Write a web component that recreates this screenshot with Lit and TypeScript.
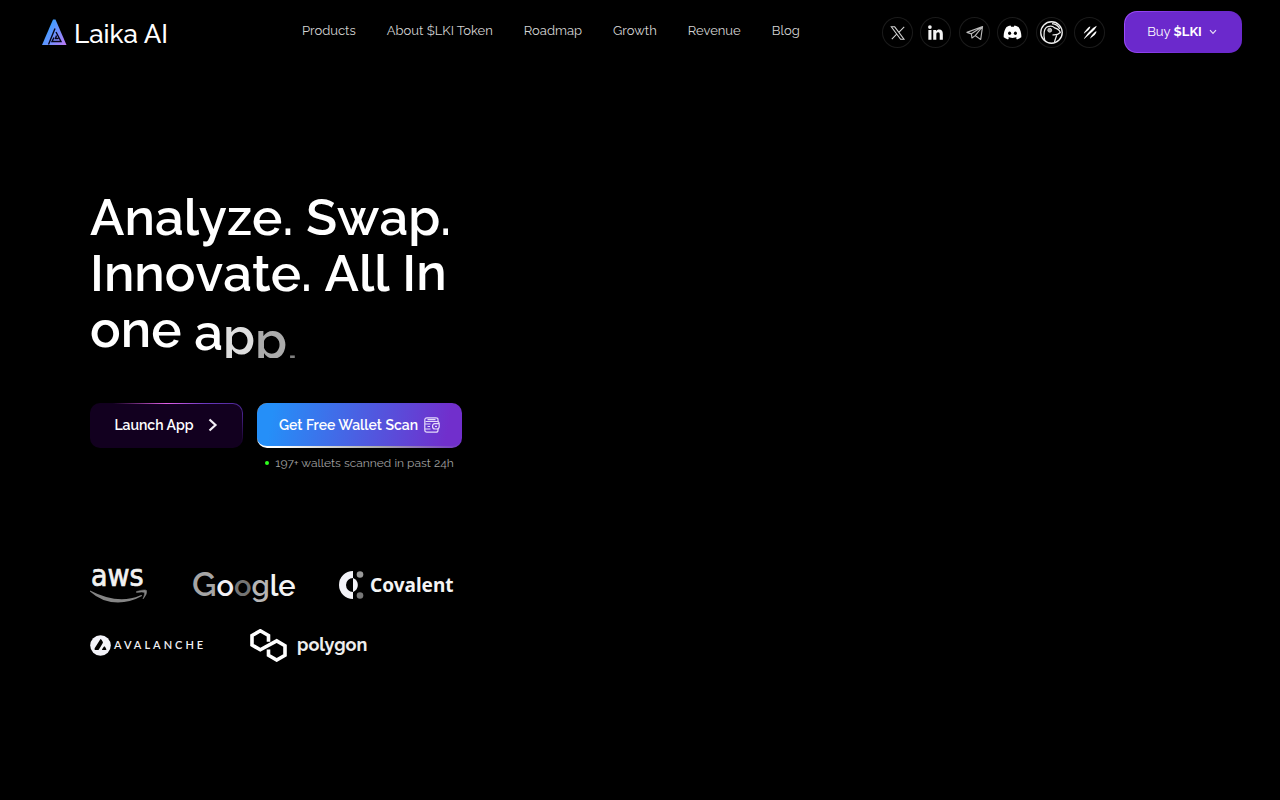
import { LitElement, html, css, svg } from "lit";
import { customElement } from "lit/decorators.js";
import { styleMap } from "lit/directives/style-map.js";

interface Glyph { ch: string; y?: number; o?: number }

const plain = (t: string): Glyph[] => [...t].map((ch) => ({ ch }));

const LINES: Glyph[][] = [
  plain("Analyze. Swap."),
  [...plain("Innovate. All I"), { ch: "n", y: -1 }],
  [...plain("one "), { ch: "a", y: 3 }, { ch: "p", y: 7, o: 0.87 }, { ch: "p", y: 11, o: 0.67 }, { ch: ".", y: 15, o: 0.5 }],
];

const NAV = ["Products", "About $LKI Token", "Roadmap", "Growth", "Revenue", "Blog"];

const SOCIALS = [
  { name: "X", icon: svg`<path d="M9 9.500h3.300l9 12H18z M21.500 9.500l-5.500 5.600M14.200 16.500l-4.700 5" fill="none" stroke="#d4d4d4" stroke-width="1"/>` },
  { name: "LinkedIn", icon: svg`<g fill="#f4f4f4"><circle cx="9.600" cy="9.700" r="1.800"/><path d="M8.100 12.500h3V22h-3zM12.800 12.500h2.800v1.300c.6-1 1.600-1.600 3-1.600 2.500 0 3.500 1.600 3.500 4.200V22h-3v-5.100c0-1.300-.4-2.100-1.500-2.100-1.200 0-1.800.8-1.800 2.200V22h-3z"/></g>` },
  { name: "Telegram", icon: svg`<path d="M7.700 14.900L22.800 9.200L21 21.700L15.700 18L12.500 20.300L12 16.300zM12 16.300L22.800 9.200L15.700 18" fill="none" stroke="#bbb" stroke-width="1.100" stroke-linejoin="round"/>` },
  { name: "Discord", icon: svg`<path d="M9.200 9.700c1.300-.8 2.600-1.200 3.900-1.400l.6 1.200h2.600l.6-1.200c1.300.2 2.600.6 3.900 1.400 2 3 3 6.500 2.700 9.900-1.300 1.100-2.700 1.700-4.200 2.100l-1-1.700c.6-.2 1.100-.5 1.600-.8-3.200 1.400-6.600 1.400-9.800 0 .5.3 1 .6 1.600.8l-1 1.700c-1.500-.4-2.900-1-4.200-2.100-.3-3.400.7-6.900 2.700-9.900z" fill="#fff"/><ellipse cx="12.200" cy="15.800" rx="1.500" ry="1.700"/><ellipse cx="17.800" cy="15.800" rx="1.500" ry="1.700"/>` },
  { name: "CoinGecko", icon: svg`<g fill="none" stroke="#eee"><circle cx="15" cy="15" r="10.400" stroke-width="1.300"/><path d="M8.500 23c-1.500-6-1-12.500 3-13.700 3-.8 5-.3 6.500 1.200 3 .8 5 2.500 5.500 4.500-2 2-4.500 2.500-7.500 2.200M20 17.800c-.5 2-1.500 3-2 6.500" stroke-width="1.200"/><path d="M15.500 6.500c3.500.3 6 2 7.500 5" stroke-width="1.200"/></g><circle cx="13.300" cy="12.800" r="1.900" fill="#aaa" stroke="#ddd" stroke-width=".8"/>` },
  { name: "Dextools", icon: svg`<g fill="#fff"><path d="M21.800 8.500Q22 10 18.500 13.500L9.500 21.500Q10.500 19 14.500 14.500T21.800 8.500z"/><path d="M15.800 9.200Q16 10.500 14 12.500L9.500 16.200Q10 14 12.500 11.500T15.800 9.200zM21.800 13.800Q21.800 15.500 20 17.300L15.300 21Q16 18.800 18.500 16.200T21.800 13.800z"/></g>` },
];

@customElement("app-root")
export class AppRoot extends LitElement {
  static styles = css`
    :host {
      display: block;
      min-height: 100vh;
      background: #000;
      color: #fff;
      font-family: Raleway, Lato, "Open Sans", sans-serif;
    }
    * { box-sizing: border-box; }
    a { color: inherit; text-decoration: none; }
    svg { display: block; flex: none; }
    button { font: inherit; color: inherit; border: 0; padding: 0; cursor: pointer; }
    .header { display: flex; align-items: center; height: 64px; padding: 0 38px 0 42px; }
    .brand { display: flex; align-items: center; gap: 7px; width: 125px; white-space: nowrap; }
    .brand-name { font-size: 26px; line-height: 32px; font-weight: 500; padding-top: 4px; }
    .nav { display: flex; gap: 31px; margin-left: 135px; font-size: 13px; line-height: 20px; color: #d4d4d4; white-space: nowrap; padding-bottom: 2px; }
    .right { display: flex; align-items: center; margin-left: auto; gap: 19px; }
    .socials { display: flex; justify-content: space-between; width: 223px; }
    .social { width: 31px; height: 31px; border-radius: 50%; box-shadow: inset 0 0 0 1px #1b1b1b; }
    .buy { display: flex; align-items: center; justify-content: center; width: 118px; height: 42px; border-radius: 13px; background: linear-gradient(#6b29cc, #6b29cc) padding-box, linear-gradient(100deg, #a04dff, #6b29cc 60%) border-box; border: 1px solid transparent; font-size: 13px; white-space: pre; padding: 0 2px 2px 0; }
    .buy svg { margin: 2px 0 0 7px; }
    .hero { padding: 125px 90px 40px; }
    .title { margin: 0; font-size: 51px; line-height: 56px; font-weight: 600; white-space: pre; }
    .line { display: block; }
    .line:last-child { clip-path: inset(0 0 -1px); }
    .glyph { display: inline-block; white-space: pre; }
    .actions { display: flex; align-items: flex-start; gap: 14px; margin-top: 46px; }
    .cta { display: flex; align-items: center; justify-content: center; height: 45px; border-radius: 10px; white-space: nowrap; font-weight: 600; }
    .launch { width: 153px; gap: 14px; font-size: 14px; padding: 0 1px 1px 0; border: 1px solid transparent; background: linear-gradient(#12001f, #12001f) padding-box, linear-gradient(#0000 20%, #12001f 90%) border-box, linear-gradient(90deg, #12001f 15%, #e060e8 50%, #6b38c0 75%, #4a2590) border-box; }
    .scan { width: 205px; gap: 6px; font-size: 14px; border: solid transparent; border-width: 0 0 2px; background: linear-gradient(100deg, #258ff8 8%, #712fcc 92%) padding-box, linear-gradient(90deg, #fff 10%, #aaa 60%, #7235c8) border-box; }
    .note { display: flex; align-items: center; justify-content: center; gap: 6px; margin: 6px 0 0; font-size: 12px; line-height: 18px; color: #a0a0a0; }
    .dot { width: 4px; height: 4px; border-radius: 50%; background: #2eff1e; }
    .partners { margin-top: 95px; display: grid; gap: 24px; }
    .row { display: flex; align-items: center; gap: 44px; height: 36px; }
    .partner { display: flex; align-items: center; white-space: nowrap; }
    .aws { width: 58px; }
    .google { width: 103px; align-items: baseline; font-size: 29px; line-height: 36px; font-weight: 600; }
    .g1 { color: #a5a5a5; font-size: 34px; } .g2 { color: #f1f0f5; } .g3 { color: #747474; } .g4 { color: #b5b5b5; } .g5 { color: #f4f4f4; }
    .covalent { gap: 6px; font: 700 19px/28px "Noto Sans", sans-serif; color: #f4f4f4; }
    .avalanche { gap: 3px; width: 116px; font: 600 11px/16px Lato, sans-serif; letter-spacing: 3px; color: #f0f0f4; }
    .polygon { gap: 10px; font-size: 18px; line-height: 28px; font-weight: 700; color: #eee; }
  `;

  render() {
    return html`
      <header class="header">
        <a class="brand" href="#" aria-label="Laika AI">
          <svg width="25" height="26" viewBox="0 0 25 26">
            <defs><linearGradient id="lg" x1="0" y1="0.300" x2="1" y2="1"><stop offset="0" stop-color="#27a5ff"/><stop offset=".5" stop-color="#6f91ff"/><stop offset="1" stop-color="#c078f4"/></linearGradient></defs>
            <path d="M11 0.500H13.500L24.500 26H0z" fill="url(#lg)"/>
            <path d="M13 9.500L6.500 25.500" fill="none" stroke="#05071a" stroke-width="1.400"/>
            <path d="M14 13L19 22.500H10L12 18.500M14.500 16.500L13.500 19.500H16.500" fill="none" stroke="#05071a" stroke-width="1.400"/>
          </svg>
          <span class="brand-name">Laika AI</span>
        </a>
        <nav class="nav">${NAV.map((n) => html`<a href="#">${n}</a>`)}</nav>
        <div class="right">
          <div class="socials">
            ${SOCIALS.map((s) => html`<a class="social" href="#" aria-label=${s.name}><svg width="31" height="31" viewBox="0 0 30 30">${s.icon}</svg></a>`)}
          </div>
          <button class="buy"><span>Buy </span><b>$LKI</b><svg width="8" height="6" viewBox="0 0 8 6"><path d="M1 1.200L4 4.300L7 1.200" fill="none" stroke="#e8e0f5" stroke-width="1.200"/></svg></button>
        </div>
      </header>
      <main class="hero">
        <h1 class="title" aria-label="Analyze. Swap. Innovate. All In one app.">${LINES.map((l) => html`<span class="line">${l.map((g) =>
          html`<span class="glyph" style=${styleMap(g.y ? { transform: `translateY(${g.y}px)`, opacity: String(g.o ?? 1) } : {})}>${g.ch}</span>`)}</span>`)}</h1>
        <div class="actions">
          <button class="cta launch">Launch App<svg width="10" height="14" viewBox="0 0 10 14"><path d="M1.500 1.500L7.500 7L1.500 12.500" fill="none" stroke="#f4f0f7" stroke-width="2.200"/></svg></button>
          <div>
            <button class="cta scan">Get Free Wallet Scan<svg width="16" height="16" viewBox="0 0 16 16"><g fill="none" stroke="#e4dcfa" stroke-width="1.200"><path d="M14 5V2.500Q14 .8 12 .8H3Q.8.8.8 3v10q0 2.200 2.200 2.200h9q2 0 2-2V12"/><path d="M1.500 4.500H13Q15.200 4.500 15.200 7v2.500q0 2.500-2.500 2.500H11Q8.500 12 8.500 9.300T11 6.700h4M3.500 2.700h8M1 7h5.500M3.500 9.500H6M1 12h5.500"/><path d="M11 9.400h2"/></g></svg></button>
            <p class="note"><span class="dot"></span>197+ wallets scanned in past 24h</p>
          </div>
        </div>
        <section class="partners" aria-label="Partners">
          <div class="row">
            <div class="partner aws">
              <svg width="58" height="60" viewBox="0 -12 58 60" role="img" aria-label="aws">
                <text x="1" y="19" font-family="DejaVu Sans Condensed, DejaVu Sans" font-stretch="condensed" font-size="30" fill="#f2f2f2" stroke="#f2f2f2" stroke-width=".7">aws</text>
                <path d="M0 23.500Q28 38 50 28.500Q52 27.500 52 29Q40 35.500 28 35.500Q12 35.500 0 24.500z" fill="#858585"/>
                <path d="M46.500 24.500Q55 22 56.500 23.500Q57.500 27 53 32Q55 27 54.500 25.500Q53 24.500 46.500 25.500z" fill="#858585" stroke="#858585" stroke-width=".5"/>
              </svg>
            </div>
            <div class="partner google"><span class="g1">G</span><span class="g2">o</span><span class="g3">o</span><span class="g4">g</span><span class="g5">le</span></div>
            <div class="partner covalent">
              <svg width="25" height="30" viewBox="0 0 25 30"><path d="M14 1A14 14 0 0 0 14 29V22A7 7 0 0 1 14 8z" fill="#f3f3f8"/><path d="M14 8A7.500 7.500 0 0 1 14 22z" fill="#f3f3f8"/><circle cx="21" cy="4.500" r="3.300" fill="#999"/><circle cx="21" cy="25.500" r="3.300" fill="#777"/></svg>
              <span>Covalent</span>
            </div>
          </div>
          <div class="row">
            <div class="partner avalanche">
              <svg width="21" height="21" viewBox="0 0 21 21"><circle cx="10.500" cy="10.500" r="10.300" fill="#f4f4fa"/><path d="M10.500 4Q11.400 4 13 7.200Q12.500 9 8.500 15H5Q4 14.500 4.800 13zM14.200 11.200Q15 11.200 16.500 14.500Q16 15 14.500 15H12Q12 14 14.200 11.200z" fill="#000"/></svg>
              <span>AVALANCHE</span>
            </div>
            <div class="partner polygon">
              <svg width="37" height="33" viewBox="0 0 37 33"><path d="M18.500 12.800V6.500L10.300 1.800L2 6.500V16L10.300 20.800L26.700 11.900L35 16.700V26.200L26.700 31L18.500 26.200V20.500" fill="none" stroke="#fff" stroke-width="3.600"/></svg>
              <span>polygon</span>
            </div>
          </div>
        </section>
      </main>
    `;
  }
}
